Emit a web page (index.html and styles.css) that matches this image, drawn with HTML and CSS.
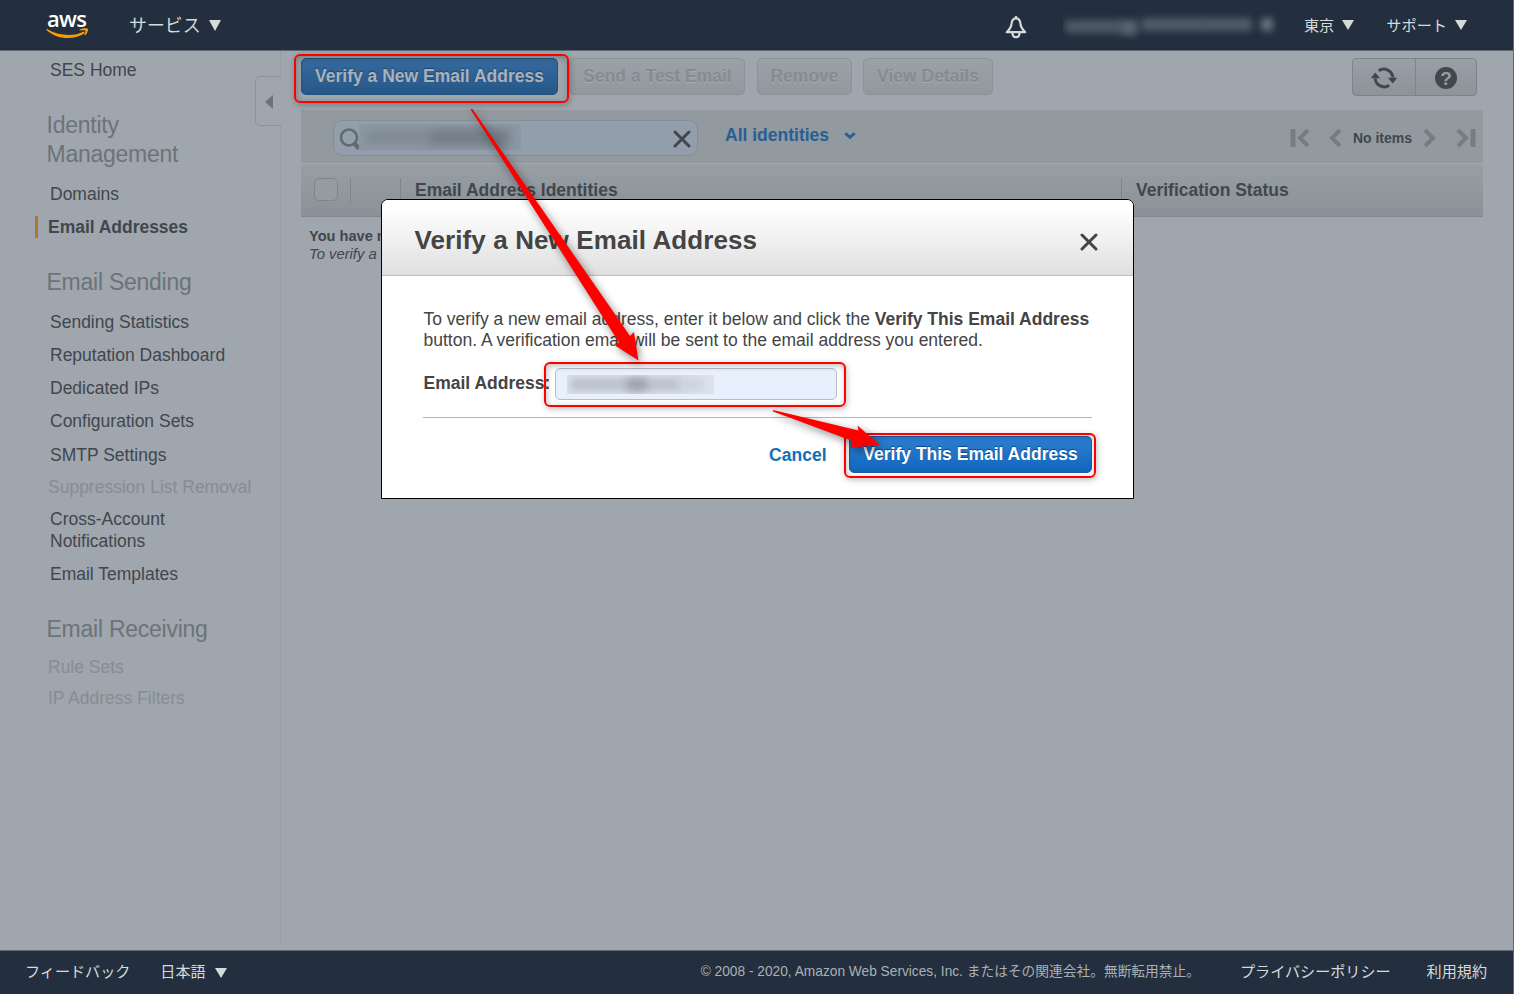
FILE: index.html
```
<!DOCTYPE html>
<html lang="ja">
<head>
<meta charset="utf-8">
<title>SES Management Console</title>
<link rel="stylesheet" href="styles.css">
</head>
<body>
<div class="page">
  <header class="topbar">
    <div class="logo">
      <span class="logo-text">aws</span>
      <svg class="logo-smile" width="43" height="11" viewBox="0 0 43 11"><path d="M.6 .8C12 8 28 9 37.500 3.400L39 5C28 12.800 10 11.600.2 1.800Z" fill="#f90"/><path d="M33.600 1.500C36 .2 41 0 41.800.8c.7 1-.4 4.700-2.600 6.600l-.8-.5C39.200 5 39.700 3.200 39.200 2.600c-.6-.6-3.300-.5-5.600-.2Z" fill="#f90"/></svg>
    </div>
    <div class="nav-item services"><span>サービス</span><i class="caret big"></i></div>
    <div class="nav-right">
      <svg class="bell" width="24" height="24" viewBox="0 0 24 24" fill="none" stroke="#d5dbdb" stroke-width="2.200" stroke-linejoin="round"><path d="M12 3.200C8.500 3.800 7.600 6.200 7.400 9.500 7.200 13 5.200 14.600 2.800 17.200H21.200C18.800 14.600 16.800 13 16.600 9.500 16.400 6.200 15.500 3.800 12 3.200Z"/><path d="M8.500 18c0 5.600 7 5.600 7 0"/><path d="M12 3V1"/></svg>
      <div class="account"><i class="smear a1"></i><i class="smear a2"></i><i class="smear a3"></i><i class="smear a4"></i><i class="smear a5"></i></div>
      <div class="nav-item region"><span>東京</span><i class="caret"></i></div>
      <div class="nav-item support"><span>サポート</span><i class="caret"></i></div>
    </div>
  </header>

  <div class="body">
    <nav class="sidebar">
      <a class="link home">SES Home</a>
      <h2 class="group">Identity<br>Management</h2>
      <a class="link first">Domains</a>
      <a class="link active">Email Addresses</a>
      <h2 class="group">Email Sending</h2>
      <a class="link first">Sending Statistics</a>
      <a class="link">Reputation Dashboard</a>
      <a class="link">Dedicated IPs</a>
      <a class="link">Configuration Sets</a>
      <a class="link lower">SMTP Settings</a>
      <a class="link disabled">Suppression List Removal</a>
      <a class="link near">Cross-Account<br>Notifications</a>
      <a class="link">Email Templates</a>
      <h2 class="group">Email Receiving</h2>
      <a class="link disabled rules">Rule Sets</a>
      <a class="link disabled filters">IP Address Filters</a>
      <div class="collapse"><i class="collapse-arrow"></i></div>
    </nav>

    <main class="main">
      <div class="toolbar">
        <button class="btn primary dimmed">Verify a New Email Address</button>
        <button class="btn off send">Send a Test Email</button>
        <button class="btn off remove">Remove</button>
        <button class="btn off details">View Details</button>
        <div class="icon-group">
          <span class="icon-btn refresh"><svg width="28" height="24" viewBox="0 0 28 24"><g fill="none" stroke="#41474d" stroke-width="3"><path d="M8.800 4.700A9 9 0 0 1 22.800 11.500"/><path d="M19.200 19.300A9 9 0 0 1 5.200 12.500"/></g><path d="M17.800 11.800h9.400l-4.400 5.600ZM.8 12.200h9.400L5.200 6.600Z" fill="#41474d"/></svg></span>
          <span class="icon-btn help"><span class="help-dot">?</span></span>
        </div>
      </div>
      <div class="filterbar">
        <div class="search">
          <svg class="lens" width="22" height="24" viewBox="0 0 22 24" fill="none" stroke="#62696f"><circle cx="10" cy="9.500" r="8" stroke-width="2.600"/><path d="M15.300 15.200l4.700 5.300" stroke-width="4.500"/></svg>
          <div class="search-blur"><i class="search-ink"></i><i class="search-ink dark"></i></div>
          <svg class="clear" width="18" height="18" viewBox="0 0 18 18" stroke="#41474d" stroke-width="3" stroke-linecap="round"><path d="M2 2L16 16M16 2L2 16"/></svg>
        </div>
        <div class="filter-select">All identities<svg width="12" height="8" viewBox="0 0 12 8" fill="none" stroke="#275f94" stroke-width="2.800"><path d="M1.300 1.200L6 5.400 10.700 1.200"/></svg></div>
        <div class="pager">
          <svg width="20" height="20" viewBox="0 0 20 20" fill="none" stroke="#757c82"><path d="M3 1V19" stroke-width="5"/><path d="M18 2L10 10L18 18" stroke-width="4"/></svg>
          <svg class="prev" width="14" height="20" viewBox="0 0 14 20" fill="none" stroke="#757c82" stroke-width="4"><path d="M12 2L4 10L12 18"/></svg>
          <span class="pager-text">No items</span>
          <svg class="next" width="14" height="20" viewBox="0 0 14 20" fill="none" stroke="#757c82" stroke-width="4"><path d="M2 2L10 10L2 18"/></svg>
          <svg class="last" width="20" height="20" viewBox="0 0 20 20" fill="none" stroke="#757c82"><path d="M17 1V19" stroke-width="5"/><path d="M2 2L10 10L2 18" stroke-width="4"/></svg>
        </div>
      </div>
      <div class="thead">
        <div class="th check"><i class="checkbox"></i></div>
        <div class="th blank"></div>
        <div class="th identity">Email Address Identities</div>
        <div class="th status">Verification Status</div>
      </div>
      <div class="empty">
        <b>You have n</b>
        <em>To verify a</em>
      </div>
    </main>
  </div>

  <footer class="footer">
    <span class="feedback">フィードバック</span>
    <span class="lang">日本語<i class="caret"></i></span>
    <span class="copy">© 2008 - 2020, Amazon Web Services, Inc. またはその関連会社。無断転用禁止。</span>
    <span class="privacy">プライバシーポリシー</span>
    <span class="terms">利用規約</span>
  </footer>

  <section class="modal">
    <div class="modal-head">
      <h1>Verify a New Email Address</h1>
      <svg width="18" height="18" viewBox="0 0 18 18" stroke="#444" stroke-width="3" stroke-linecap="round"><path d="M2 2L16 16M16 2L2 16"/></svg>
    </div>
    <div class="modal-body">
      <p>To verify a new email address, enter it below and click the <b>Verify This Email Address</b><br><span class="line2">button. A verification email will be sent to the email address you entered.</span></p>
      <div class="field">
        <label>Email Address:</label>
        <div class="field-input"><div class="input-blur"><i></i><i class="at"></i><i class="tail"></i></div></div>
      </div>
      <div class="actions">
        <a class="cancel">Cancel</a>
        <button class="btn primary bright">Verify This Email Address</button>
      </div>
    </div>
  </section>

  <div class="callout c1"></div>
  <div class="callout c2"></div>
  <div class="callout c3"></div>
  <svg class="arrows" width="1514" height="994" viewBox="0 0 1514 994" fill="#f00">
    <path d="M470.300 109L472.500 109L604.500 299L630 336L634 332L638.500 360.500L615 345.500L619 342.500L592 300Z"/>
    <path d="M773 410L858.500 430.500L857.500 425.500L880 445L850.500 447.500L852.500 441L773 411.500Z"/>
  </svg>
</div>
</body>
</html>
```
FILE: styles.css
```
* { box-sizing: border-box; }
body {
  margin: 0;
  font-family: "Liberation Sans", "Noto Sans CJK JP", sans-serif;
  font-size: 17.5px;
  color: #41474d;
  background: #9fa6ad;
}
i { font-style: normal; display: block; }
.page {
  position: relative;
  width: 1514px;
  height: 994px;
  overflow: hidden;
  display: flex;
  flex-direction: column;
  border-right: 1px solid #62676a;
}
svg { display: block; flex: none; }

/* Top navigation */
.topbar {
  flex: none;
  height: 51px;
  display: flex;
  align-items: flex-start;
  background: #232f3e;
  border-bottom: 1px solid #5d6772;
  color: #d5dbdb;
  font-family: "Noto Sans CJK JP", sans-serif;
}
.logo { width: 44px; margin-left: 45px; padding-top: 8px; }
.logo-text {
  display: block;
  height: 20px;
  line-height: 20px;
  padding-left: 2px;
  font-family: "Open Sans", sans-serif;
  font-weight: 600;
  font-size: 22px;
  letter-spacing: -0.7px;
  color: #fff;
}
.logo-smile { margin: 0 0 0 1px; }
.nav-item { display: flex; align-items: center; height: 50px; white-space: nowrap; }
.nav-item span { padding-bottom: 3px; }
.services { margin-left: 40px; font-size: 17.9px; }
.caret {
  border: solid transparent;
  border-width: 10px 6px 0;
  border-top-color: #d5dbdb;
  margin-left: 7px;
}
.caret.big { border-width: 11px 6.500px 0; margin-left: 8px; }
.nav-right { flex: 1; display: flex; justify-content: flex-end; font-size: 15.2px; }
.bell { margin: 15px 35px 0 0; }
.account { position: relative; width: 224px; height: 36px; margin: 7px 17px 0 0; overflow: hidden; }
.smear { position: absolute; top: 13px; height: 13px; border-radius: 3px; background: #59636e; filter: blur(3.5px); }
.a1 { left: 2px; width: 58px; opacity: .8; }
.a2 { left: 57px; width: 18px; height: 15px; }
.a3 { left: 78px; width: 64px; top: 11px; opacity: .85; }
.a4 { left: 139px; width: 50px; top: 11px; opacity: .85; }
.a5 { left: 198px; width: 12px; top: 11px; background: #6a737d; }
.region .caret { margin-left: 8px; }
.support { margin: 0 46px 0 32px; }
.support .caret { margin-left: 8px; }

/* Sidebar */
.body { flex: 1; display: flex; min-height: 0; }
.sidebar {
  position: relative;
  width: 281px;
  height: 893px;
  padding: 8px 0 0 50px;
  display: flex;
  flex-direction: column;
  border-right: 1px solid #969da4;
}
.link { line-height: 22px; margin-top: 11px; white-space: nowrap; }
.home { margin-top: 0; }
.first { margin-top: 14.5px; }
.lower { margin-top: 12px; }
.near { margin-top: 10px; }
.disabled { margin: 10px 0 0 -2px; color: #868d93; }
.rules { margin-top: 12.5px; }
.filters { margin-top: 9px; }
.active {
  margin-left: -15px;
  padding-left: 10px;
  border-left: 3px solid #ad7631;
  font-weight: bold;
  letter-spacing: -0.03px;
}
.group {
  margin: 29.5px 0 0 -3.5px;
  font-size: 23px;
  line-height: 29px;
  font-weight: normal;
  letter-spacing: -0.25px;
  color: #6c7379;
}
.collapse {
  position: absolute;
  left: 255px;
  top: 25px;
  width: 26px;
  height: 50px;
  border: 1px solid #8c9399;
  border-right: 0;
  border-radius: 5px 0 0 5px;
  background: #9fa6ad;
}
.collapse-arrow {
  margin: 18px 0 0 8.5px;
  width: 0;
  border: solid transparent;
  border-width: 7px 8px 7px 0;
  border-right-color: #6c7379;
}

/* Main */
.main { flex: 1; padding: 7px 30px 0 20px; }
.toolbar { display: flex; height: 52px; align-items: flex-start; }
.btn {
  height: 37px;
  padding: 0 0 1px;
  border: 1px solid;
  border-radius: 5px;
  font: bold 17.5px "Liberation Sans", sans-serif;
  white-space: nowrap;
}
.dimmed {
  width: 257px;
  color: #a9b2ba;
  border-color: #24527f;
  background: linear-gradient(#366a9f, #265788);
  text-shadow: 0 -1px 1px #24486c;
}
.off {
  color: #848b91;
  border-color: #8b9298;
  background: linear-gradient(#9aa1a7, #91989e);
  text-shadow: 0 1px 0 #a5acb2;
}
.send { width: 176px; margin-left: 11px; padding-left: 1px; }
.remove { width: 95px; margin-left: 12px; }
.details { width: 130px; margin-left: 11px; }
.icon-group {
  display: flex;
  width: 125px;
  height: 38px;
  margin: 0 6px 0 auto;
  border: 1px solid #7d848a;
  border-radius: 4px;
  background: linear-gradient(#999fa6, #8c9399);
}
.icon-btn { flex: 1; display: flex; align-items: center; justify-content: center; }
.icon-btn.refresh { flex: none; width: 63px; border-right: 1px solid #7d848a; padding-top: 2px; }
.help-dot {
  width: 22px;
  height: 22px;
  margin-top: 2px;
  border-radius: 50%;
  background: #41474d;
  color: #959ca2;
  font: bold 19px/23px "Liberation Sans", sans-serif;
  text-align: center;
}
.filterbar {
  width: 1182px;
  height: 54px;
  padding: 10px 8px 0 32px;
  display: flex;
  background: #92999f;
  border-bottom: 1px solid #a0a7ad;
}
.search {
  width: 365px;
  height: 36px;
  padding-left: 5px;
  display: flex;
  border: 1px solid #858e97;
  border-radius: 9px;
  background: #929eab;
}
.lens { margin-top: 7px; }
.search-blur { position: relative; width: 162px; height: 26px; margin: 3px 0 0 -2px; overflow: hidden; background: #8c98a4; }
.search-ink { position: absolute; left: 6px; top: 7px; width: 145px; height: 13px; background: #7f8a95; filter: blur(5px); }
.search-ink.dark { left: 72px; width: 78px; background: #737d87; }
.clear { margin: 9px 0 0 152px; }
.filter-select {
  margin-left: 27px;
  height: 30px;
  display: flex;
  align-items: center;
  font-weight: bold;
  color: #275f94;
}
.filter-select svg { margin: 2px 0 0 15px; }
.pager { display: flex; height: 36px; align-items: center; margin-left: auto; }
.prev { margin-left: 18px; }
.pager-text { font-size: 14px; font-weight: bold; margin: 0 11px; }
.last { margin-left: 19px; }
.pager { margin-right: -1px; }
.thead {
  width: 1182px;
  height: 53px;
  padding-top: 14px;
  display: flex;
  background: linear-gradient(#979ea4, #8a9197);
  border-bottom: 1px solid #7f868c;
}
.th { height: 24px; line-height: 24px; font-weight: bold; border-right: 1px solid #7d848a; }
.th.check { width: 50px; padding-left: 13px; }
.checkbox { width: 24px; height: 23px; border: 1px solid #7e858b; border-radius: 5px; background: #949ba1; }
.th.blank { width: 50px; }
.th.identity { width: 721px; padding-left: 14px; }
.th.status { padding-left: 14px; border: 0; }
.empty { padding: 10px 0 0 8px; font-size: 14.6px; line-height: 18px; width: 110px; }
.empty b, .empty em { display: block; white-space: nowrap; }
.empty em { font-size: 14.8px; }

/* Modal */
.modal {
  position: absolute;
  left: 381px;
  top: 199px;
  width: 753px;
  height: 300px;
  border: 1px solid #000;
  border-radius: 7px 7px 0 0;
  background: #fff;
  color: #444;
  overflow: hidden;
}
.modal-head {
  height: 76px;
  padding: 4px 35px 0 32.5px;
  display: flex;
  align-items: center;
  justify-content: space-between;
  border-bottom: 1px solid #bfbfbf;
  background: linear-gradient(#fff 10%, #dfdfdf);
}
.modal-head h1 { margin: 0; font-size: 26px; line-height: 30px; letter-spacing: 0.1px; white-space: nowrap; }
.modal-head svg { margin-top: 4px; }
.modal-body { padding: 33px 41px 0; }
.modal-body p { margin: 0; padding-left: 0.5px; line-height: 21px; white-space: nowrap; }
.field { display: flex; height: 67px; padding-top: 16px; border-bottom: 1px solid #b5b5b5; }
.field label { width: 132px; padding-left: 0.5px; line-height: 33px; font-weight: bold; white-space: nowrap; }
.field-input {
  width: 282px;
  height: 32px;
  margin-top: 1px;
  padding: 6px 0 0 11px;
  border: 1px solid #b9bcc2;
  border-radius: 5px;
  background: #e8effd;
}
.input-blur { position: relative; width: 147px; height: 19px; background: #dce3ef; overflow: hidden; }
.input-blur i { position: absolute; left: 3px; top: 3px; width: 112px; height: 13px; background: #b9bfca; filter: blur(4px); }
.input-blur .at { left: 60px; width: 20px; background: #8d939e; opacity: .7; }
.input-blur .tail { left: 112px; width: 25px; background: #ccd2de; }
.actions { display: flex; justify-content: flex-end; padding-top: 18px; }
.cancel { margin: 8px 22.5px 0 0; line-height: 22px; font-weight: bold; color: #146eb4; }
.bright {
  width: 243px;
  color: #fff;
  border-color: #1c5fa8;
  background: linear-gradient(#2e7fd4, #1166bb);
  text-shadow: 0 -1px 1px #0d4680;
}

/* Annotations */
.callout {
  position: absolute;
  border: 2px solid #f00;
  border-radius: 6px;
  box-shadow: 1px 2px 6px rgba(0, 0, 0, .25), inset 1px 2px 6px rgba(0, 0, 0, .25);
}
.c1 { left: 293.5px; top: 54px; width: 275px; height: 48.5px; }
.c2 { left: 543.5px; top: 361.5px; width: 302px; height: 45px; }
.c3 { left: 843.5px; top: 433px; width: 252px; height: 44.5px; }
.arrows { position: absolute; left: 0; top: 0; filter: drop-shadow(2px 3px 4px rgba(0, 0, 0, .45)); }

/* Footer */
.footer {
  flex: none;
  height: 44px;
  padding-bottom: 5px;
  display: flex;
  align-items: center;
  border-top: 1px solid #5d6772;
  background: #232f3e;
  color: #d5dbdb;
  font-family: "Noto Sans CJK JP", sans-serif;
  font-size: 15.1px;
  white-space: nowrap;
}
.feedback { margin-left: 25px; }
.lang { display: flex; align-items: center; margin-left: 30px; }
.lang .caret { margin: 5px 0 0 9px; }
.copy { margin-left: auto; font: 13.72px "Liberation Sans", "Noto Sans CJK JP", sans-serif; color: #aab1b5; }
.privacy { margin-left: 40px; }
.terms { margin: 0 26px 0 36px; }
```
